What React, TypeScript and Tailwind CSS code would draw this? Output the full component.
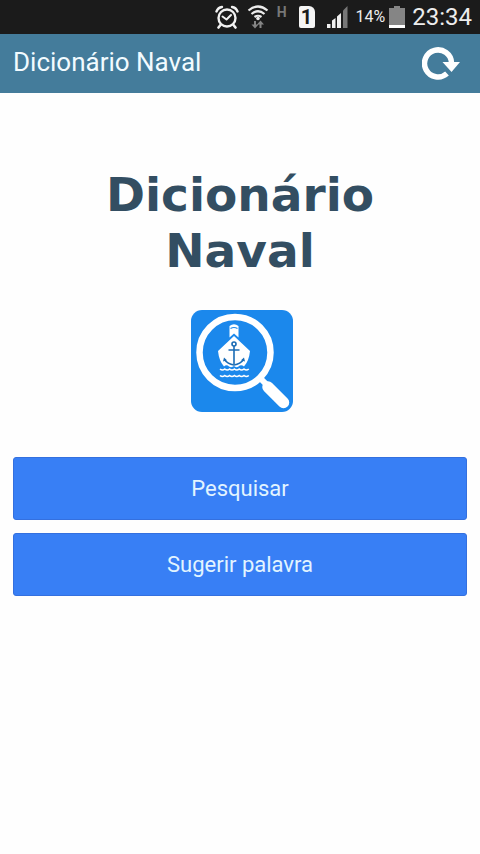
function AlarmIcon() {
  return (
    <svg width="24" height="24" viewBox="0 0 24 24" fill="none" stroke="#f1f1f1" strokeLinecap="round" strokeLinejoin="round">
      <circle cx="12" cy="13" r="8.5" strokeWidth="2.4" />
      <path d="M7.5 11.5 11.5 14.5 16 10" strokeWidth="2" />
      <path d="M1.5 6.5Q3 2.5 7 2M22.5 6.5Q21 2.5 17 2" strokeWidth="2.4" />
      <path d="M5.5 20 3.5 22.5M18.5 20 20.5 22.5" strokeWidth="2.6" />
    </svg>
  )
}

function WifiIcon() {
  return (
    <svg width="22" height="24" viewBox="0 0 22 24" fill="none">
      <path d="M1.5 5.5Q11-2.500 20.5 5.5M4.5 9Q11 3.5 17.5 9M7.5 12Q11 9.5 14.5 12" stroke="#ececec" strokeWidth="2.2" />
      <circle cx="11" cy="13.5" r="1.8" fill="#ececec" />
      <path d="M8 16v5M13.500 23v-5" stroke="#858585" strokeWidth="2" />
      <path d="M4.500 19.500h7L8 23.500zM10 19.500h7l-3.500-4z" fill="#858585" />
    </svg>
  )
}

function SignalIcon() {
  return (
    <svg width="21" height="22" viewBox="0 0 21 22" fill="#efefef">
      <path d="M0 18h3.500v4H0zM5 14.500l3.500-2.500V22H5zM10 10.500l4-3.500V22h-4z" />
      <path d="M16 4.500l4.500-4.500v22H16z" fill="#777" />
    </svg>
  )
}

function BatteryIcon() {
  return (
    <svg width="16" height="22" viewBox="0 0 16 22">
      <path d="M5 0h6v2h5v20H0V2h5z" fill="#858585" />
      <path d="M0 19h16v3H0z" fill="#fff" />
    </svg>
  )
}

function SimIcon() {
  return (
    <span className="flex h-[22px] w-4 items-center justify-center rounded-xs rounded-tr-md bg-[#f4f4f4] text-xl font-bold text-[#1b1b1b]">
      1
    </span>
  )
}

function ReloadIcon() {
  return (
    <svg width="38" height="34" viewBox="0 0 38 34" fill="none">
      <path d="M25 26.500A13.500 13.500 0 1 1 29.500 16" stroke="#fff" strokeWidth="5.500" />
      <path d="M20.500 15H38L29.500 25z" fill="#fff" />
    </svg>
  )
}

function AppLogo() {
  return (
    <svg width="104" height="104" viewBox="0 0 104 104" fill="none" aria-hidden="true">
      <rect x="1" y="1" width="102" height="102" rx="11" fill="#1b88ec" />
      <circle cx="45" cy="43.5" r="35.5" stroke="#fff" strokeWidth="6.5" />
      <path d="M70 69 79 78" stroke="#fff" strokeWidth="6" />
      <path d="M78 78 93.500 93.500" stroke="#fff" strokeWidth="11.5" strokeLinecap="round" />
      <path d="M39.500 17Q44 13.500 48.500 17V28.500L44 24.500 39.500 28.500z" fill="#fff" />
      <path d="M40.500 19.500Q44 17.500 47.500 19.500" stroke="#1b88ec" strokeWidth="1.2" />
      <path d="M44 27 60 42Q59 52 54 57.500Q51 55 48.500 57.500Q46 59 44 57Q41.500 59 39 57.500Q36.500 55 34 57.500Q29 52 28 42z" fill="#fff" />
      <g stroke="#1b6cb5" strokeWidth="1.6">
        <circle cx="44" cy="35" r="2" />
        <path d="M44 37V55M38.500 41h11M34.500 50.500Q37.500 55 44 56Q50.500 55 53.500 50.500" />
      </g>
      <path d="M33 52.500 34 48.500 37 51.200zM55 52.500 54 48.500 51 51.200z" fill="#1b6cb5" />
      <path
        d="M30 60q2.400 2 4.800 0q2.400 2 4.800 0q2.400 2 4.800 0q2.400 2 4.800 0q2.400 2 4.800 0q2.400 2 4.800 0M30 66.500q2.400 2 4.800 0q2.400 2 4.800 0q2.400 2 4.800 0q2.400 2 4.800 0q2.400 2 4.800 0q2.400 2 4.800 0"
        stroke="#fff"
        strokeWidth="1.6"
      />
    </svg>
  )
}

function StatusBar() {
  return (
    <div className="flex h-[34px] items-center justify-end bg-[#1b1b1b] pr-2 text-[#ededed]">
      <AlarmIcon />
      <div className="ml-2">
        <WifiIcon />
      </div>
      <span className="ml-2 self-start pt-1 text-sm leading-4 font-bold text-[#777]">H</span>
      <div className="ml-3">
        <SimIcon />
      </div>
      <div className="ml-3">
        <SignalIcon />
      </div>
      <span className="ml-2 text-base">14%</span>
      <div className="ml-1">
        <BatteryIcon />
      </div>
      <span className="ml-[7px] text-2xl">23:34</span>
    </div>
  )
}

const actions = ["Pesquisar", "Sugerir palavra"]

export default function App() {
  return (
    <div className="min-h-screen bg-[#fefefe] font-[Roboto,sans-serif]">
      <StatusBar />

      <header className="flex h-[59px] items-center justify-between bg-[#447c9b] pr-5 pl-[13px]">
        <span className="pb-1 text-[26px] leading-8 text-[#f2fbff]">Dicionário Naval</span>
        <button type="button" aria-label="Atualizar">
          <ReloadIcon />
        </button>
      </header>

      <main className="flex flex-col items-center px-[13px] pt-[74px]">
        <h1 className="text-center font-['DejaVu_Sans',sans-serif] text-[47px] leading-14 font-bold text-[#334e62]">
          Dicionário
          <br />
          Naval
        </h1>

        <div className="mt-[30px] pl-[3px]">
          <AppLogo />
        </div>

        <div className="mt-11 flex w-full flex-col gap-[13px]">
          {actions.map((label) => (
            <button
              key={label}
              type="button"
              className="h-[63px] w-full rounded-[3px] border border-[#3470df] bg-[#387ff5] text-[22px] text-[#e2f4ff]"
            >
              {label}
            </button>
          ))}
        </div>
      </main>
    </div>
  )
}
